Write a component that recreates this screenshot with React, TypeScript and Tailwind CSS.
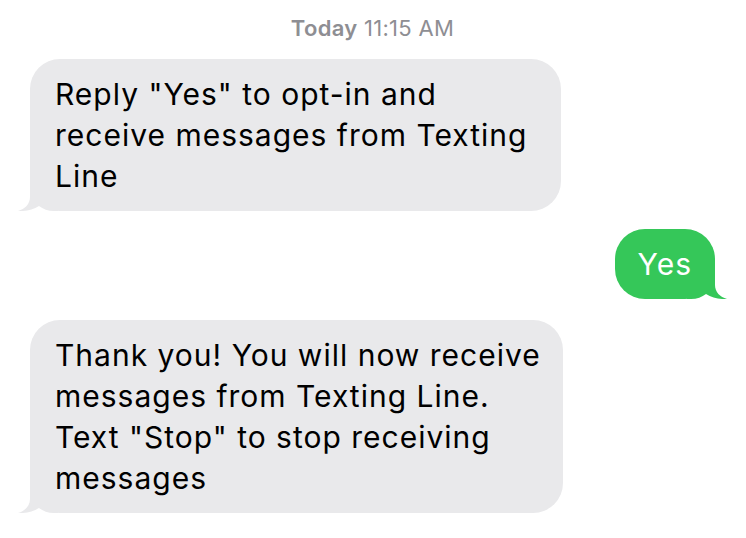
const font = { fontFamily: "Inter, 'Noto Sans', sans-serif" };

function TailLeft() {
  return (
    <svg className="absolute left-[-12px] bottom-0" width="40" height="30" viewBox="0 0 40 30">
      <path
        d="M12 0 L12 16 C12 23 7 28 0 30 C8 30.5 15 28.5 21 25 C25 28 30 30 36 30 L40 30 L40 0 Z"
        fill="#e9e9eb"
      />
    </svg>
  );
}

function TailRight() {
  return (
    <svg className="absolute right-[-12px] bottom-0" width="40" height="30" viewBox="0 0 40 30">
      <path
        d="M28 0 L28 16 C28 23 33 28 40 30 C32 30.5 25 28.5 19 25 C15 28 10 30 4 30 L0 30 L0 0 Z"
        fill="#35c759"
      />
    </svg>
  );
}

function Received({ lines, width }: { lines: string[]; width: string }) {
  return (
    <div className={`relative ${width} rounded-[30px] bg-[#e9e9eb] pl-[25px] pt-[15px] pb-[14px] text-[30px] leading-[41px] tracking-[1px] text-black`}>
      <TailLeft />
      <div className="relative">
        {lines.map((l) => (
          <div key={l}>{l}</div>
        ))}
      </div>
    </div>
  );
}

export default function App() {
  return (
    <div className="w-[746px] h-[538px] bg-white overflow-hidden flex flex-col pl-[30px] pr-[31px]" style={font}>
      <div className="pt-[14px] text-center text-[22px] leading-[28px] tracking-[0.3px] text-[#8e8e93]">
        <span className="font-semibold">Today</span> 11:15 AM
      </div>

      <div className="mt-[17px]">
        <Received
          width="w-[531px]"
          lines={['Reply "Yes" to opt-in and', "receive messages from Texting", "Line"]}
        />
      </div>

      <div className="mt-[18px] flex justify-end">
        <div className="relative rounded-[30px] bg-[#35c759] px-[23px] pt-[15px] pb-[14px] text-[30px] leading-[41px] tracking-[1px] text-white">
          <TailRight />
          <span className="relative">Yes</span>
        </div>
      </div>

      <div className="mt-[21px]">
        <Received
          width="w-[533px]"
          lines={[
            "Thank you! You will now receive",
            "messages from Texting Line.",
            'Text "Stop" to stop receiving',
            "messages",
          ]}
        />
      </div>
    </div>
  );
}
